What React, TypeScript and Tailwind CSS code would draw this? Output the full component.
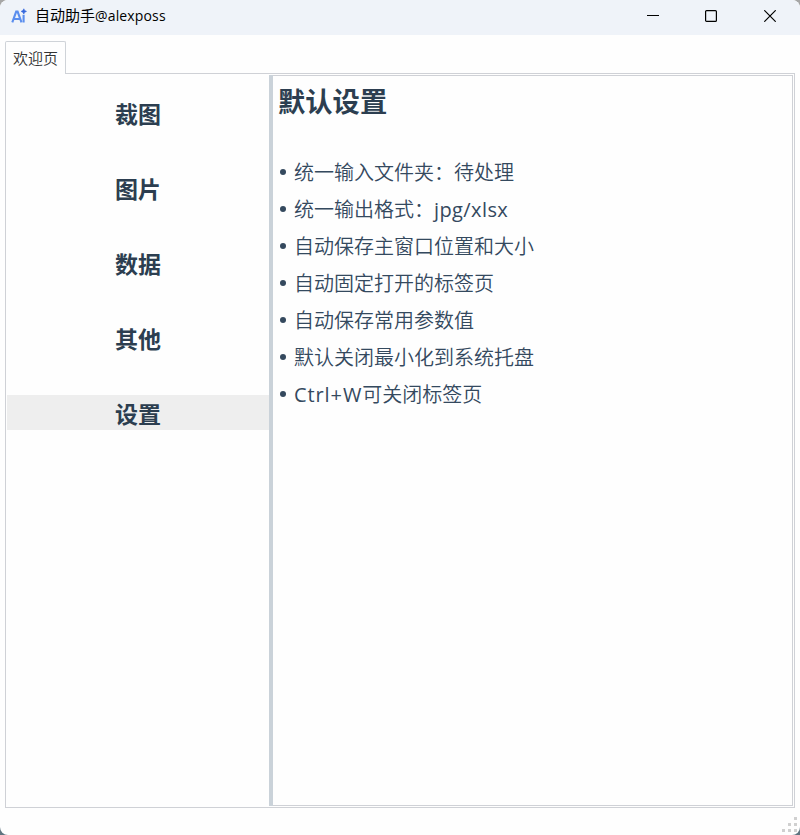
import { useState } from "react";

const MENU_ITEMS: string[] = ["裁图", "图片", "数据", "其他", "设置"];

const DEFAULTS: Array<{ text: string; latin?: string; tail?: string }> = [
  { text: "统一输入文件夹：待处理" },
  { text: "统一输出格式：", latin: "jpg/xlsx" },
  { text: "自动保存主窗口位置和大小" },
  { text: "自动固定打开的标签页" },
  { text: "自动保存常用参数值" },
  { text: "默认关闭最小化到系统托盘" },
  { text: "", latin: "Ctrl+W", tail: "可关闭标签页" },
];

function TitleBar() {
  return (
    <header className="flex h-[35px] shrink-0 items-center bg-[#eff3f9] pl-[11px]">
      {/* App logo */}
      <svg className="mb-[3px]" width="16" height="16" viewBox="0 0 16 16" fill="none">
        <path
          d="M1.3 14.4 5.2 3.6h1.4l3.9 10.8M2.8 11h6.2"
          stroke="#5b8eee"
          strokeWidth="2.1"
        />
        <path d="M12.6 6.8v7.6" stroke="#5b8eee" strokeWidth="2.1" />
        <path
          d="M12.8.8l.9 1.7 1.8.9-1.8.9-.9 1.7-.9-1.7-1.8-.9 1.8-.9Z"
          fill="#3467dd"
          stroke="#3467dd"
          strokeWidth=".6"
        />
      </svg>
      <h1 className="mb-1 ml-2 text-[15px] leading-[20px] text-black">
        自动助手
        <span className="font-['Open_Sans'] text-[14px] tracking-[0.15px]">@alexposs</span>
      </h1>
      <div className="ml-auto flex h-full items-center pb-[3px]">
        <button type="button" aria-label="Minimize" className="flex h-full w-[58px] items-center justify-center">
          <svg width="12" height="12" viewBox="0 0 12 12">
            <path d="M0 5.5h12" stroke="#000" />
          </svg>
        </button>
        <button type="button" aria-label="Maximize" className="flex h-full w-[58px] items-center justify-center">
          <svg width="12" height="12" viewBox="0 0 12 12" fill="none">
            <rect x=".6" y=".6" width="10.8" height="10.8" rx="1" stroke="#000" strokeWidth="1.2" />
          </svg>
        </button>
        <button type="button" aria-label="Close" className="flex h-full w-[60px] items-center justify-center">
          <svg width="12" height="12" viewBox="0 0 12 12">
            <path d="M.3.3l11.4 11.4M11.7.3.3 11.7" stroke="#000" strokeWidth="1.2" />
          </svg>
        </button>
      </div>
    </header>
  );
}

export default function App() {
  const [selected, setSelected] = useState("设置");

  return (
    <div className="h-[835px] w-[800px] bg-linear-to-b from-[#a6a6a6] from-50% to-[#5f7480] to-50% font-['Noto_Sans_CJK_SC',sans-serif]">
      <div className="relative flex h-full flex-col overflow-hidden rounded-[8px] bg-[#fefefe]">
        <TitleBar />

        <div className="mt-[6px] flex h-8 shrink-0 pl-[5px]">
          <div className="relative z-10 h-[33px] w-[61px] rounded-t-[2px] border border-b-0 border-[#cfd3d8] bg-[#fefefe] text-center text-[15px] leading-[32px] font-[350] whitespace-nowrap text-[#333]">
            欢迎页
          </div>
        </div>

        <main className="mr-[5px] ml-[5px] flex h-[735px] shrink-0 border border-[#cfd1d6] p-px">
          <nav className="flex w-[262px] flex-col gap-10 pt-5">
            {MENU_ITEMS.map((item) => (
              <button
                key={item}
                type="button"
                onClick={() => setSelected(item)}
                className={`h-[35px] w-full text-center text-[23px] leading-[37px] font-bold text-[#2c3e50] ${
                  item === selected ? "bg-[#eeeeee]" : ""
                }`}
              >
                {item}
              </button>
            ))}
          </nav>

          <div className="w-1 bg-[#cad2d9]" />

          <section className="flex-1 border border-l-0 border-[#cfd1d6] pl-[5px]">
            <h2 className="pt-1 text-[27.3px] leading-10 font-bold text-[#2c3e50]">
              默认设置
            </h2>
            <ul className="mt-[33px] text-[20px] leading-[37px] font-[350] text-[#34495e]">
              {DEFAULTS.map((row) => (
                <li key={row.text + (row.latin ?? "")} className="flex h-[37px] items-center">
                  <span className="mr-2 ml-[2px] size-[6px] rounded-full bg-[#34495e]" />
                  <span>
                    {row.text}
                    {row.latin && (
                      <span
                        className={`font-['Open_Sans'] font-normal ${
                          row.tail ? "tracking-[0.9px]" : "tracking-[0.4px]"
                        }`}
                      >
                        {row.latin}
                      </span>
                    )}
                    {row.tail}
                  </span>
                </li>
              ))}
            </ul>
          </section>
        </main>

        {/* Resize grip */}
        <svg className="absolute right-[3px] bottom-[3px]" width="15" height="15" viewBox="0 0 15 15" fill="#d0d0d0">
          <path d="M12 0h3v3h-3zM6 6h3v3H6zM12 6h3v3h-3zM0 12h3v3H0zM6 12h3v3H6zM12 12h3v3h-3z" />
        </svg>
      </div>
    </div>
  );
}
